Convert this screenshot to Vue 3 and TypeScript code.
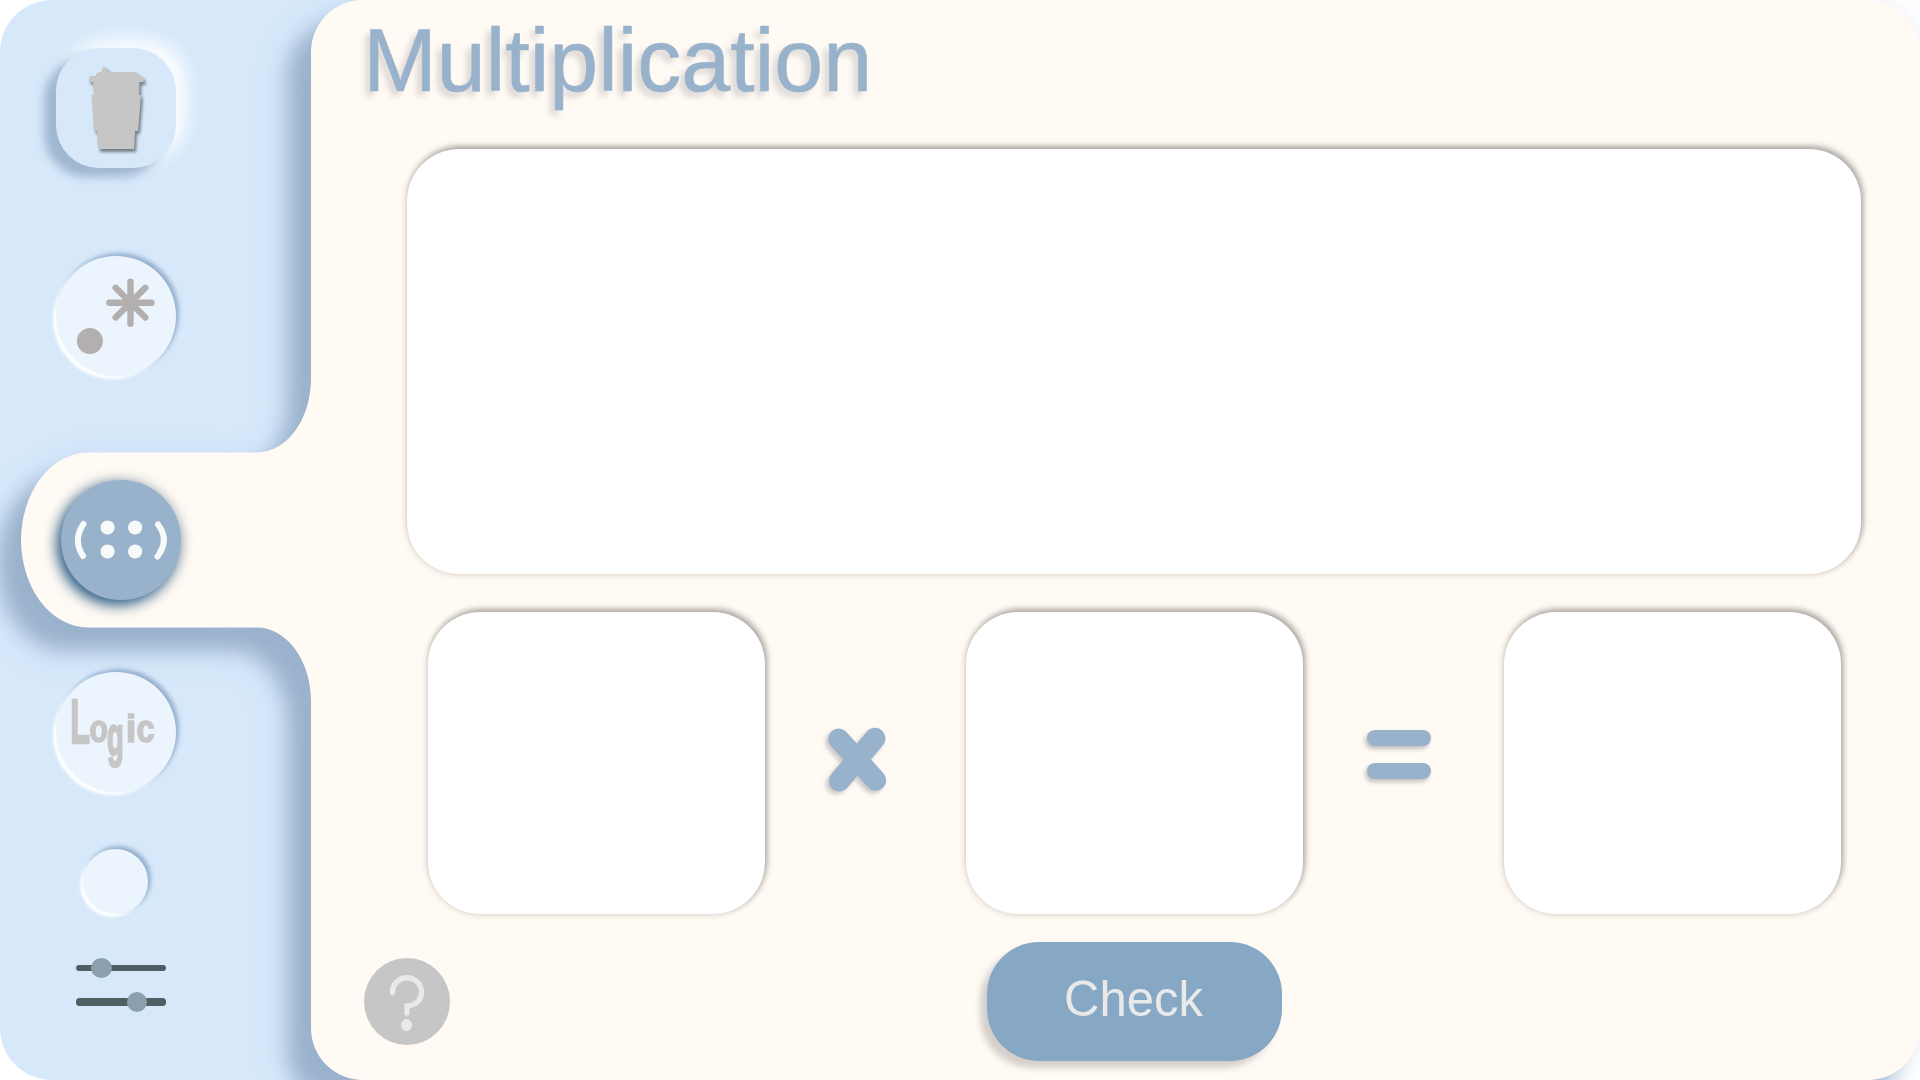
<script setup lang="ts">
const diagonals = [0, 45, 90, 135]
const dots = [
  [46.6, 47.5], [74.1, 47.5],
  [46.6, 71.5], [74.1, 71.5],
]
</script>

<template>
  <div class="app">
    <svg class="panel" viewBox="0 0 1920 1080" width="1920" height="1080">
      <path
        d="M363 0H1868A52 52 0 0 1 1920 52V1028A52 52 0 0 1 1868 1080H363A52 52 0 0 1 311 1028V701.5A54 74 0 0 0 257 627.5H88A67 88 0 0 1 21 540A67 88 0 0 1 88 452.500H257A54 74 0 0 0 311 378.500V52A52 52 0 0 1 363 0Z"
        fill="#fffaf4"
      />
    </svg>

    <nav class="sidebar">
      <button class="tile" aria-label="Clear">
        <svg class="cup" viewBox="0 0 120 120">
          <path
            d="M33 34V30Q33 28 36 28H39.500Q40 24 44 24H45.500Q45.500 19 48.500 19T52 24H79Q81.500 24 82.500 27Q87.500 28 87.500 31V34H83.500L83 47H85L82 83H79L78 101H42L41 83H38L35.500 47H38L37 34Z"
            fill="#c6c6c6"
          />
        </svg>
      </button>

      <button class="round operators" aria-label="Operators">
        <svg viewBox="0 0 120 120">
          <g stroke="#b3afae" stroke-width="6.400" stroke-linecap="round">
            <line
              v-for="a in diagonals"
              :key="a"
              x1="53.500"
              y1="46.700"
              x2="95.500"
              y2="46.700"
              :transform="`rotate(${a} 74.5 46.7)`"
            />
          </g>
          <circle cx="33.900" cy="85" r="13" fill="#b3afae" />
        </svg>
      </button>

      <button class="round active" aria-label="Multiplication">
        <svg viewBox="0 0 120 120">
          <g fill="none" stroke="#f7faf9" stroke-width="6" stroke-linecap="round">
            <path d="M22.500 44Q11.500 60 22 76" />
            <path d="M97 44.500Q109 60 96.500 76.500" />
          </g>
          <circle v-for="([x, y], i) in dots" :key="i" :cx="x" :cy="y" r="7.100" fill="#f7faf9" />
        </svg>
      </button>

      <button class="round logic">
        <span class="word"><b class="l">L</b><b class="o">o</b><b class="g">g</b><b class="i">i</b><b class="c">c</b></span>
      </button>

      <button class="round small" aria-label="Empty slot"></button>

      <svg class="sliders" viewBox="0 0 90 56" width="90" height="56">
        <rect x="0" y="8" width="90" height="6" rx="3" fill="#4f5f62" />
        <rect x="0" y="41" width="90" height="8" rx="3.500" fill="#4f5f62" />
        <ellipse cx="25.500" cy="11" rx="10.500" ry="10" fill="#8aa0ae" />
        <circle cx="61" cy="45" r="10" fill="#8aa0ae" />
      </svg>
    </nav>

    <main class="content">
      <h1>Multiplication</h1>
      <div class="box board"></div>
      <div class="equation">
        <div class="box factor"></div>
        <svg class="sign" viewBox="0 0 70 70" width="70" height="70">
          <path
            d="M16.700 14L53.700 55.300M53 13.300L17.300 56"
            stroke="#99b2cc"
            stroke-width="21"
            stroke-linecap="round"
          />
        </svg>
        <div class="box factor"></div>
        <div class="equals"><i></i><i></i></div>
        <div class="box factor"></div>
      </div>
      <footer>
        <button class="help" aria-label="Help">
          <svg viewBox="0 0 86 87" width="86" height="87">
            <path
              d="M28.500 34.500A14.500 14.500 0 0 1 57.500 34C57.500 42.500 50.500 47.800 43 48V55"
              fill="none"
              stroke="#e9e9e9"
              stroke-width="5.300"
              stroke-linecap="round"
            />
            <ellipse cx="42.500" cy="67" rx="5.500" ry="6" fill="#e9e9e9" />
          </svg>
        </button>
        <button class="check"><span>Check</span></button>
      </footer>
    </main>
  </div>
</template>

<style>
body {
  background: #fff;
}
</style>

<style scoped>
.app {
  position: relative;
  display: flex;
  width: 1920px;
  height: 1080px;
  overflow: hidden;
  background: linear-gradient(#d7e8fa, #d7e8fa) no-repeat 52px 0 / 500px 1080px;
  font-family: "Liberation Sans", Arial, Helvetica, sans-serif;
}

.app::before {
  content: "";
  position: absolute;
  left: 0;
  top: 0;
  width: 104px;
  height: 1080px;
  border-radius: 52px 0 0 52px;
  background: #d7e8fa;
}

.panel {
  position: absolute;
  left: 0;
  top: 0;
  overflow: visible;
  filter: drop-shadow(-23px 23px 10px rgba(141, 167, 194, 0.8)) drop-shadow(-4px 3px 13px rgba(178, 200, 236, 0.4));
}

button {
  display: block;
  padding: 0;
  border: 0;
  font: inherit;
  flex: none;
}

button svg {
  display: block;
}

.sidebar {
  position: relative;
  display: flex;
  flex-direction: column;
  width: 311px;
  box-sizing: border-box;
  padding: 48px 0 0 56px;
}

.tile {
  width: 120px;
  height: 120px;
  border-radius: 43px;
  background: #d7e8fa;
  box-shadow: -12px 9px 10px #9fb7d1, 10px -8px 20px #fff;
}

.cup {
  filter: drop-shadow(2px 3px 1.5px rgba(0, 0, 0, 0.45));
}

.round {
  width: 120px;
  height: 120px;
  border-radius: 50%;
  background: #ecf5fd;
  box-shadow: 3px -3px 4px #94b0ce, -3px 3px 3px #fff;
}

.operators {
  margin-top: 88px;
}

.active {
  margin: 104px 0 0 5px;
  background: #99b2cc;
  box-shadow: -4px 5px 14px #2d5f88, 0 0 14px rgba(120, 140, 150, 0.35);
}

.logic {
  margin-top: 72px;
}

.word {
  display: flex;
  align-items: flex-start;
  height: 72px;
  margin: -2px 0 0 14px;
  color: #c6c6c6;
}

.word b {
  display: block;
  line-height: 1;
  transform-origin: 0 0;
  -webkit-text-stroke: 1.2px #c6c6c6;
}

.l {
  width: 19px;
  font-size: 30px;
  transform: scale(1.08, 2.12);
  margin-top: -5px;
}

.o {
  width: 18px;
  font-size: 28px;
  transform: scale(1.08, 1.4);
  margin-top: 15px;
}

.g {
  width: 17px;
  font-size: 28px;
  transform: scale(0.98, 1.95);
  margin-top: 15px;
}

.i {
  width: 11px;
  font-size: 28px;
  transform: scale(1.3, 1.4);
  margin-top: 15px;
}

.c {
  width: 18px;
  font-size: 28px;
  transform: scale(1.16, 1.4);
  margin-top: 15px;
}

.small {
  width: 65px;
  height: 65px;
  margin: 57px 0 0 27px;
}

.sliders {
  margin: 43px 0 0 20px;
}

.content {
  position: relative;
  display: flex;
  flex-direction: column;
  flex: 1;
}

h1 {
  height: 149px;
  margin: 0 0 0 52.5px;
  font-size: 88px;
  font-weight: 400;
  line-height: 100px;
  padding-top: 11px;
  box-sizing: border-box;
  color: #99b2cc;
  -webkit-text-stroke: 0.6px #99b2cc;
  text-shadow: -5px 5px 6px rgba(80, 80, 90, 0.22);
  transform: scaleY(1.02);
  transform-origin: 0 91px;
}

.box {
  border-radius: 52px;
  background: #fff;
  box-shadow: 2px -3px 6px rgba(0, 0, 0, 0.33), -1px 1px 7px rgba(80, 50, 30, 0.12);
}

.board {
  width: 1454px;
  height: 425px;
  margin-left: 96px;
}

.equation {
  display: flex;
  align-items: center;
  margin: 38px 0 0 117px;
}

.factor {
  width: 337px;
  height: 302px;
}

.sign {
  margin: 0 74px 0 57px;
  transform: translateY(-3px);
  filter: drop-shadow(-3px 3px 2px rgba(60, 60, 70, 0.25));
}

.equals {
  display: flex;
  flex-direction: column;
  gap: 17px;
  width: 64px;
  margin: 0 73px 17px 64px;
}

.equals i {
  height: 16px;
  border-radius: 8px;
  background: #99b2cc;
  box-shadow: -2px 3px 4px rgba(60, 60, 70, 0.3);
}

footer {
  display: flex;
  align-items: flex-start;
  margin: 28px 0 0 53px;
}

.help {
  width: 86px;
  height: 87px;
  margin-top: 16px;
  border-radius: 50%;
  background: #c6c6c6;
}

.check {
  width: 295px;
  height: 119px;
  margin-left: 537px;
  border-radius: 52px;
  background: #87a8c5;
  color: #e9e9e9;
  font-size: 49px;
  box-shadow: -7px 7px 6px #d6d0cc;
}

.check span {
  display: block;
  line-height: 56px;
  transform: translate(-1px, -3px) scaleY(1.02);
}
</style>
